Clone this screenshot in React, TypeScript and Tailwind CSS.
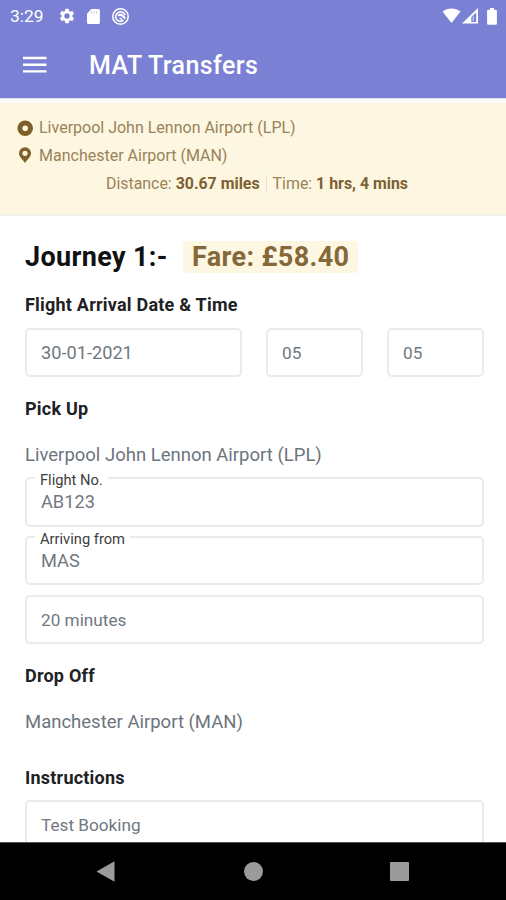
import type { ReactNode } from 'react';
import clsx from 'clsx';

interface FieldProps {
  value: string;
  label?: string;
  className?: string;
  valueClass?: string;
}

function StatusBar() {
  return (
    <div className="flex h-8 items-center pl-[10px] pr-2 text-white">
      <span className="w-[48px] whitespace-nowrap text-[17.4px] leading-8">3:29</span>
      <svg className="size-[18px]" viewBox="0 0 24 24" fill="currentColor">
        <path d="M19.14 12.94c.04-.3.06-.61.06-.94 0-.32-.02-.64-.07-.94l2.03-1.58a.49.49 0 0 0 .12-.61l-1.92-3.32a.49.49 0 0 0-.59-.22l-2.39.96a7 7 0 0 0-1.62-.94l-.36-2.54a.48.48 0 0 0-.48-.41h-3.84a.47.47 0 0 0-.47.41l-.36 2.54c-.59.24-1.13.57-1.62.94l-2.39-.96a.48.48 0 0 0-.59.22L2.74 8.87a.47.47 0 0 0 .12.61l2.03 1.58a6.2 6.2 0 0 0-.02 1.88l-2.03 1.58a.49.49 0 0 0-.12.61l1.92 3.32c.12.22.37.29.59.22l2.39-.96c.5.38 1.03.7 1.62.94l.36 2.54c.05.24.24.41.48.41h3.84c.24 0 .44-.17.47-.41l.36-2.54c.59-.24 1.13-.56 1.62-.94l2.39.96c.22.08.47 0 .59-.22l1.92-3.32a.47.47 0 0 0-.12-.61zM12 15.6a3.6 3.6 0 1 1 0-7.2 3.6 3.6 0 0 1 0 7.2z" />
      </svg>
      <svg className="ml-[9px] h-[17px] w-[17px]" viewBox="0 0 17 17" fill="currentColor">
        <path d="M6.5 1H13.3a1.6 1.6 0 0 1 1.6 1.6V14.4a1.6 1.6 0 0 1-1.6 1.6H3.6A1.6 1.6 0 0 1 2 14.4V5.5z" />
        <path d="M6.5 3.4v2M9 3.4v2M11.5 3.4v2" stroke="#c3c7ee" strokeWidth="1.2" />
      </svg>
      <svg className="ml-[9px] size-[19px]" viewBox="0 0 19 19" fill="none" stroke="currentColor">
        <circle cx="9.5" cy="9.5" r="7.7" strokeWidth="1.6" />
        <path d="M12.6 13.2A4.8 4.8 0 1 1 14.1 8.3" strokeWidth="1.6" />
        <path d="M7 8.8a3.2 3.2 0 0 1 4.2-.4l3 3.2" strokeWidth="2.2" />
        <path d="M8.6 10.8l2.6 2.2" strokeWidth="1.4" />
      </svg>
      <div className="ml-auto flex items-center">
        <svg className="h-[16px] w-[19px]" viewBox="0 0 19 16" fill="currentColor">
          <path d="M.5 3.5C5.5-.4 13.5-.4 18.5 3.5L9.5 15z" />
        </svg>
        <svg className="ml-px h-[16px] w-[17px]" viewBox="0 0 17 16" fill="currentColor">
          <path fillRule="evenodd" d="M0 15.5 16 0v15.5zM9.3 9v5h4.9V4.5z" />
          <path d="M10.6 8.2h1.3v5h-1.3z" opacity=".55" />
        </svg>
        <svg className="ml-[7px] h-[17px] w-[12px]" viewBox="0 0 12 17" fill="currentColor">
          <path d="M4 0h4v1.7h1.7a1.2 1.2 0 0 1 1.2 1.2v12.6a1.2 1.2 0 0 1-1.2 1.2H2.3a1.2 1.2 0 0 1-1.2-1.2V2.9a1.2 1.2 0 0 1 1.2-1.2H4z" />
        </svg>
      </div>
    </div>
  );
}

function AppBar() {
  return (
    <div className="flex h-[66px] items-center pl-[23px] text-white">
      <svg className="h-[18px] w-[24px]" viewBox="0 0 24 18" fill="currentColor">
        <path d="M0 .8h23.5v2.4H0zM0 7.5h23.5v2.4H0zM0 14.2h23.5v2.4H0z" />
      </svg>
      <h1 className="ml-[42px] pt-[2px] text-[25px] font-medium tracking-[0.4px]">MAT Transfers</h1>
    </div>
  );
}

function RouteSummary() {
  return (
    <div className="h-[113px] border-b-2 border-[#f3f3ee] bg-[#fdf6e1] px-[17px] pt-[11px] text-[16px] leading-[28px] text-[#99835a]">
      <div className="flex h-[28px] items-center">
        <svg className="mr-[5px] size-[17px]" viewBox="0 0 17 17">
          <circle cx="8.2" cy="8.2" r="5.3" fill="none" stroke="#7d5f28" strokeWidth="5" />
        </svg>
        <span>Liverpool John Lennon Airport (LPL)</span>
      </div>
      <div className="flex h-[27px] items-center">
        <svg className="mr-[5px] size-[17px]" viewBox="0 0 17 17" fill="#7d5f28">
          <path fillRule="evenodd" d="M8 .3a6 6 0 0 1 6 6c0 4-4.5 7-6 9.7C6.5 13.3 2 10.3 2 6.3a6 6 0 0 1 6-6zm0 3.4a2.6 2.6 0 1 0 0 5.2 2.6 2.6 0 0 0 0-5.2z" />
        </svg>
        <span>Manchester Airport (MAN)</span>
      </div>
      <div className="flex h-[29px] items-center whitespace-nowrap pl-[89px] text-[15.9px]">
        <span>
          Distance: <b className="font-bold text-[#7d6131]">30.67 miles</b>
        </span>
        <span className="mx-[6px] h-[18px] w-px bg-[#e6e0e2]" />
        <span>
          Time: <b className="font-bold text-[#7d6131]">1 hrs, 4 mins</b>
        </span>
      </div>
    </div>
  );
}

function SectionTitle({ children, className }: { children: ReactNode; className?: string }) {
  return (
    <h3 className={clsx('text-[18px] font-bold leading-6 tracking-[0.22px] text-[#202124]', className)}>
      {children}
    </h3>
  );
}

function Field({ value, label, className, valueClass }: FieldProps) {
  return (
    <div
      className={clsx(
        'relative flex shrink-0 items-center rounded-[5px] border-2 border-[#e9ebec] pl-[14px] text-[#71787f]',
        className ?? 'h-[49px]',
      )}
    >
      {label && (
        <span className="absolute -top-[9px] left-[8px] bg-white px-[5px] text-[14.7px] leading-[20px] text-[#3c3e40]">
          {label}
        </span>
      )}
      <span className={valueClass ?? 'pt-px text-[17.2px]'}>{value}</span>
    </div>
  );
}

function NavBar() {
  return (
    <div className="flex h-[58px] shrink-0 items-center border-t border-[#555] bg-black text-[#9b9b9b]">
      <svg className="ml-[96px] h-[22px] w-[19px]" viewBox="0 0 19 22" fill="currentColor">
        <path d="M.5 10.5 18.5.2v20.6z" />
      </svg>
      <div className="ml-[129px] size-[19px] rounded-full bg-[#9b9b9b]" />
      <div className="ml-[127px] size-[19px] rounded-[1px] bg-[#9b9b9b]" />
    </div>
  );
}

export default function App() {
  return (
    <div className="flex h-[900px] w-[506px] flex-col overflow-hidden bg-white font-['Roboto',sans-serif]">
      <header className="h-[98px] shrink-0 bg-[#7a80d3]">
        <StatusBar />
        <AppBar />
      </header>

      <main className="min-h-0 flex-1 overflow-hidden">
        <div className="h-[5px] border-t border-[#dcdff5] bg-[#fbfbf9]" />
        <RouteSummary />

        <div className="px-[25px] pt-[25px]">
          <div className="flex h-8 items-center whitespace-nowrap text-[27px] font-bold tracking-[0.35px]">
            <h2 className="w-[158px] text-[#101112]">Journey 1:-</h2>
            <span className="h-8 w-[175px] rounded-[4px] bg-[#fdf6e1] pl-[9px] leading-8 text-[#85683a]">
              Fare: £58.40
            </span>
          </div>

          <SectionTitle className="mt-5">Flight Arrival Date &amp; Time</SectionTitle>
          <div className="mt-[11px] flex w-[459px] gap-6">
            <Field value="30-01-2021" className="h-[49px] w-[217px]" valueClass="text-[18.2px]" />
            <Field value="05" className="h-[49px] w-[97px]" valueClass="pt-[2px] text-[17.2px]" />
            <Field value="05" className="h-[49px] w-[97px]" valueClass="pt-[2px] text-[17.2px]" />
          </div>

          <SectionTitle className="mt-5">Pick Up</SectionTitle>
          <p className="mt-[22px] text-[18.5px] leading-6 text-[#6c757d]">Liverpool John Lennon Airport (LPL)</p>
          <div className="mt-[10px] flex w-[459px] flex-col">
            <Field label="Flight No." value="AB123" className="h-[50px]" valueClass="text-[18.2px]" />
            <Field label="Arriving from" value="MAS" className="mt-[9px] h-[49px]" valueClass="text-[18.2px]" />
            <Field value="20 minutes" className="mt-[10px] h-[49px]" valueClass="pt-[2px] text-[17.2px]" />
          </div>

          <SectionTitle className="mt-5">Drop Off</SectionTitle>
          <p className="mt-[22px] text-[18.5px] leading-6 text-[#6c757d]">Manchester Airport (MAN)</p>

          <SectionTitle className="mt-8">Instructions</SectionTitle>
          <Field value="Test Booking" className="mt-[10px] h-[51px] w-[459px]" />
        </div>
      </main>

      <NavBar />
    </div>
  );
}
